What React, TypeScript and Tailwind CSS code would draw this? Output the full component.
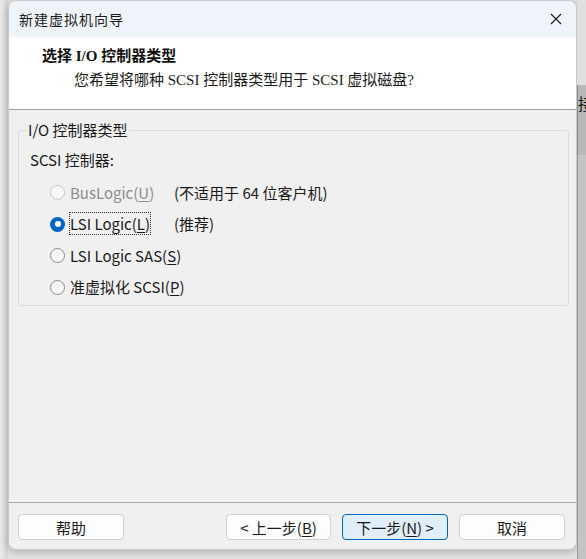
import React from "react";

const cjk = { fontFamily: '"Noto Sans CJK SC", "Liberation Sans", sans-serif' };
const mixed = { fontFamily: '"Liberation Serif", "Noto Sans CJK SC", serif' };

const Radio = ({ checked, disabled }: { checked?: boolean; disabled?: boolean }) => {
  if (checked) {
    return (
      <span className="flex h-[15px] w-[15px] shrink-0 items-center justify-center rounded-full bg-[#0067c0]">
        <span className="h-[6px] w-[6px] rounded-full bg-white" />
      </span>
    );
  }
  return (
    <span
      className={`h-[15px] w-[15px] shrink-0 rounded-full border bg-[#f7f7f7] ${
        disabled ? "border-[#c6c6c6]" : "border-[#8a8a8a]"
      }`}
    />
  );
};

// underline the mnemonic letter like a win32 dialog
const Key = ({ k }: { k: string }) => <span className="underline underline-offset-2">{k}</span>;

const Button = ({ children, primary }: { children: React.ReactNode; primary?: boolean }) => (
  <button
    className={`flex h-[26px] w-full items-center justify-center whitespace-nowrap rounded-[4px] border text-[15px] leading-none text-[#1a1a1a] ${
      primary ? "border-[#0067c0] bg-[#e0eef9]" : "border-[#d0d0d0] bg-[#fdfdfd]"
    }`}
    style={cjk}
  >
    {children}
  </button>
);

export default function App() {
  const options = [
    { label: "BusLogic(", key: "U", note: "(不适用于 64 位客户机)", disabled: true },
    { label: "LSI Logic(", key: "L", note: "(推荐)", checked: true },
    { label: "LSI Logic SAS(", key: "S" },
    { label: "准虚拟化 SCSI(", key: "P" },
  ];

  return (
    <div className="flex h-[559px] w-[586px] overflow-hidden bg-[#e4e4e4]">
      <div className="w-[8px] shrink-0 bg-gradient-to-r from-[#ebebeb] to-[#d6d6d6]" />

      <div className="flex h-[550px] w-[569px] shrink-0 flex-col overflow-hidden rounded-[8px] border border-[#c9c9c9] bg-[#f0f0f0] shadow-[0_2px_8px_rgba(0,0,0,0.25)]">
        {/* title bar */}
        <div className="flex h-[36px] shrink-0 items-center justify-between bg-[#eef4f9] pl-[10px] pr-[6px]">
          <span className="text-[14px] tracking-[1px] text-[#1a1a1a]" style={cjk}>
            新建虚拟机向导
          </span>
          <svg width="24" height="24" viewBox="0 0 24 24" className="mr-[2px]">
            <path d="M7 7 L17 17 M17 7 L7 17" stroke="#1a1a1a" strokeWidth="1.1" fill="none" />
          </svg>
        </div>

        {/* header */}
        <div className="flex h-[73px] shrink-0 flex-col border-b border-[#a0a0a0] bg-white pl-[33px] pt-[9px]">
          <span className="text-[15px] font-bold leading-[20px] text-[#111]" style={mixed}>
            选择 I/O 控制器类型
          </span>
          <span className="ml-[32px] mt-[4px] whitespace-nowrap text-[15px] leading-[20px] text-[#1a1a1a]" style={mixed}>
            您希望将哪种 SCSI 控制器类型用于 SCSI 虚拟磁盘?
          </span>
        </div>

        {/* body */}
        <div className="flex flex-1 flex-col px-[9px] pt-[20px]">
          <div className="relative h-[176px] w-[551px] rounded-[2px] border border-[#dcdcdc]">
            <span
              className="absolute left-[8px] top-[-11px] bg-[#f0f0f0] px-[1px] text-[15px] leading-[20px] text-[#1a1a1a]"
              style={cjk}
            >
              I/O 控制器类型
            </span>
            <div className="flex flex-col pl-[11px] pt-[19px] text-[15px] text-[#1a1a1a]" style={cjk}>
              <span className="leading-[20px]">SCSI 控制器:</span>
              <div className="mt-[12px] flex flex-col gap-[10.5px] pl-[20px]">
                {options.map((o) => (
                  <div key={o.key} className="flex h-[21px] items-center whitespace-nowrap">
                    <Radio checked={o.checked} disabled={o.disabled} />
                    <span
                      className={`ml-[5px] w-[104px] shrink-0 leading-[20px] ${
                        o.disabled ? "text-[#8c8c8c]" : ""
                      }`}
                    >
                      <span
                        className={
                          o.checked ? "outline outline-1 outline-dotted outline-[#333] outline-offset-0" : ""
                        }
                      >
                        {o.label}
                        <Key k={o.key} />)
                      </span>
                    </span>
                    {o.note && <span className="leading-[20px]">{o.note}</span>}
                  </div>
                ))}
              </div>
            </div>
          </div>
        </div>

        {/* footer */}
        <div className="flex h-[47px] shrink-0 items-start border-t border-[#a8a8a8] pl-[9px] pr-[11px] pt-[11px]">
          <div className="w-[106px]">
            <Button>帮助</Button>
          </div>
          <div className="ml-auto flex gap-[11px]">
            <div className="w-[105px]">
              <Button>
                &lt; 上一步(<Key k="B" />)
              </Button>
            </div>
            <div className="w-[106px]">
              <Button primary>
                下一步(<Key k="N" />) &gt;
              </Button>
            </div>
            <div className="w-[106px]">
              <Button>取消</Button>
            </div>
          </div>
        </div>
      </div>

      <div className="flex w-[9px] shrink-0 flex-col">
        <div className="h-[85px] bg-[#e0e0e0]" />
        <div className="h-[70px] overflow-hidden border-l border-[#888] bg-[#b8b8b8]">
          <span className="block pt-[8px] text-[16px] leading-[20px] text-[#111]" style={cjk}>
            接
          </span>
        </div>
        <div className="flex-1 border-l border-[#999] bg-[#c4c4c4]" />
      </div>
    </div>
  );
}
